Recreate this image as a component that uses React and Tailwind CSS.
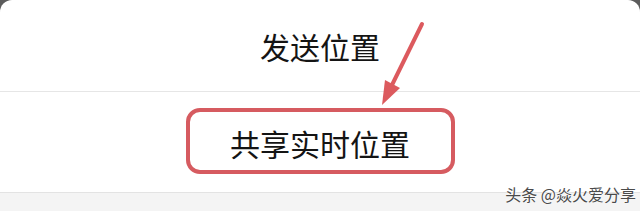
export default function App() {
  return (
    <div
      className="relative w-[640px] h-[211px] overflow-hidden bg-[#5c5c5c]"
      style={{ fontFamily: '"Noto Sans CJK SC", "Noto Sans", sans-serif' }}
    >
      <div className="flex h-full flex-col rounded-t-[12px] bg-white">
        <div className="flex h-[91px] items-center justify-center text-[30px] leading-none text-[#141414]">
          发送位置
        </div>
        <div className="h-px bg-[#e6e6e6]" />
        <div className="flex h-[100px] items-center justify-center pb-[3px]">
          <div className="flex h-[66px] w-[269px] items-center justify-center rounded-[14px] border-[4px] border-[#d65b60] pt-[4px] text-[30px] leading-none text-[#141414]">
            共享实时位置
          </div>
        </div>
        <div className="h-px bg-[#e3e3e3]" />
        <div className="flex-1 bg-[#f4f4f4]" />
      </div>
      <svg className="absolute left-0 top-0" width="640" height="211" viewBox="0 0 640 211">
        <line x1="422" y1="24" x2="391" y2="87" stroke="#dc5a5e" strokeWidth="4" strokeLinecap="round" />
        <polygon points="382,105 385,80 400,88" fill="#dc5a5e" />
      </svg>
      <div
        className="absolute right-[4px] top-[186px] text-[16px] leading-none text-[#4a4a4a]"
        style={{ textShadow: '0 0 1px #fff, 0 0 2px #fff' }}
      >
        头条 @焱火爱分享
      </div>
    </div>
  );
}
